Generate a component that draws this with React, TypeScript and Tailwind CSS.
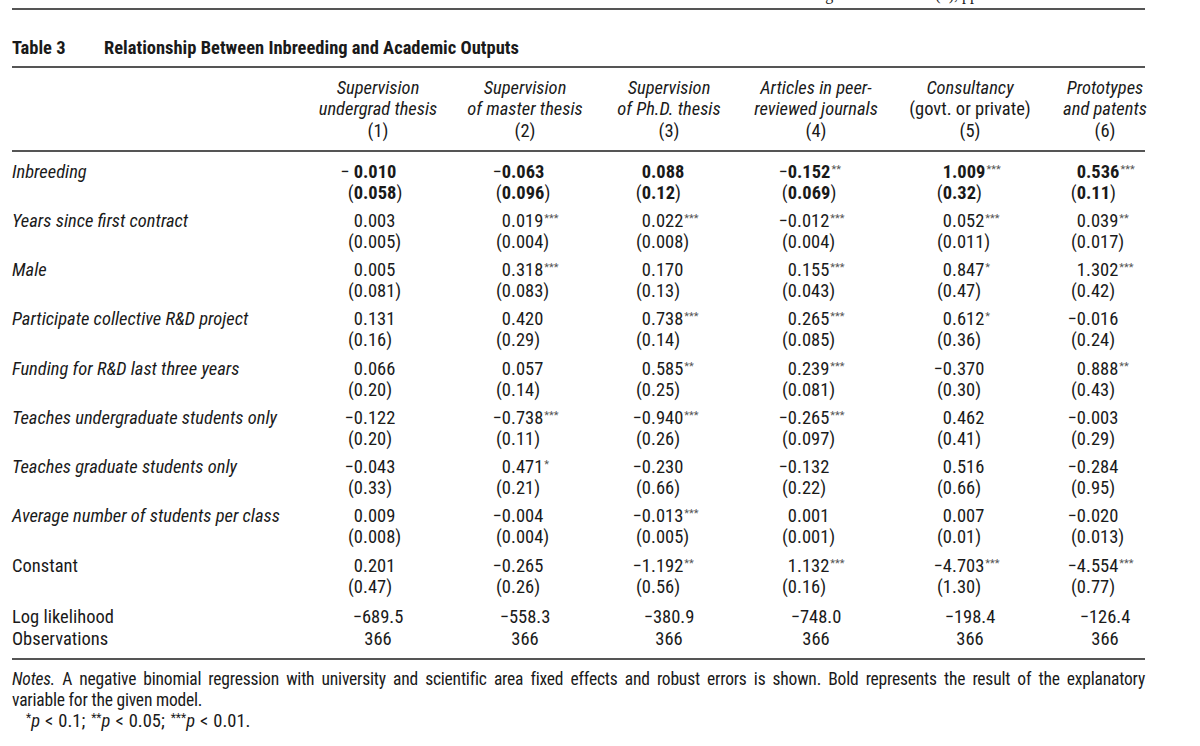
import type { ReactNode } from 'react';

type Cell = [string, number, string];
type Row = { label: string; italic: boolean; bold?: boolean; cells: Cell[] };

const rows: Row[] = [
  {
    label: 'Inbreeding',
    italic: true,
    bold: true,
    cells: [
      ['− 0.010', 0, '0.058'],
      ['−0.063', 0, '0.096'],
      ['0.088', 0, '0.12'],
      ['−0.152', 2, '0.069'],
      ['1.009', 3, '0.32'],
      ['0.536', 3, '0.11'],
    ],
  },
  {
    label: 'Years since first contract',
    italic: true,
    cells: [
      ['0.003', 0, '0.005'],
      ['0.019', 3, '0.004'],
      ['0.022', 3, '0.008'],
      ['−0.012', 3, '0.004'],
      ['0.052', 3, '0.011'],
      ['0.039', 2, '0.017'],
    ],
  },
  {
    label: 'Male',
    italic: true,
    cells: [
      ['0.005', 0, '0.081'],
      ['0.318', 3, '0.083'],
      ['0.170', 0, '0.13'],
      ['0.155', 3, '0.043'],
      ['0.847', 1, '0.47'],
      ['1.302', 3, '0.42'],
    ],
  },
  {
    label: 'Participate collective R&D project',
    italic: true,
    cells: [
      ['0.131', 0, '0.16'],
      ['0.420', 0, '0.29'],
      ['0.738', 3, '0.14'],
      ['0.265', 3, '0.085'],
      ['0.612', 1, '0.36'],
      ['−0.016', 0, '0.24'],
    ],
  },
  {
    label: 'Funding for R&D last three years',
    italic: true,
    cells: [
      ['0.066', 0, '0.20'],
      ['0.057', 0, '0.14'],
      ['0.585', 2, '0.25'],
      ['0.239', 3, '0.081'],
      ['−0.370', 0, '0.30'],
      ['0.888', 2, '0.43'],
    ],
  },
  {
    label: 'Teaches undergraduate students only',
    italic: true,
    cells: [
      ['−0.122', 0, '0.20'],
      ['−0.738', 3, '0.11'],
      ['−0.940', 3, '0.26'],
      ['−0.265', 3, '0.097'],
      ['0.462', 0, '0.41'],
      ['−0.003', 0, '0.29'],
    ],
  },
  {
    label: 'Teaches graduate students only',
    italic: true,
    cells: [
      ['−0.043', 0, '0.33'],
      ['0.471', 1, '0.21'],
      ['−0.230', 0, '0.66'],
      ['−0.132', 0, '0.22'],
      ['0.516', 0, '0.66'],
      ['−0.284', 0, '0.95'],
    ],
  },
  {
    label: 'Average number of students per class',
    italic: true,
    cells: [
      ['0.009', 0, '0.008'],
      ['−0.004', 0, '0.004'],
      ['−0.013', 3, '0.005'],
      ['0.001', 0, '0.001'],
      ['0.007', 0, '0.01'],
      ['−0.020', 0, '0.013'],
    ],
  },
  {
    label: 'Constant',
    italic: false,
    cells: [
      ['0.201', 0, '0.47'],
      ['−0.265', 0, '0.26'],
      ['−1.192', 2, '0.56'],
      ['1.132', 3, '0.16'],
      ['−4.703', 3, '1.30'],
      ['−4.554', 3, '0.77'],
    ],
  },
];

const logLik = ['−689.5', '−558.3', '−380.9', '−748.0', '−198.4', '−126.4'];

const headers: { lines: string[]; upright?: number }[] = [
  { lines: ['Supervision', 'undergrad thesis'] },
  { lines: ['Supervision', 'of master thesis'] },
  { lines: ['Supervision', 'of Ph.D. thesis'] },
  { lines: ['Articles in peer-', 'reviewed journals'] },
  { lines: ['Consultancy', '(govt. or private)'], upright: 1 },
  { lines: ['Prototypes', 'and patents'] },
];

// where the integer part ends, so the decimal points line up per column
const offsets = ['ml-[16px]', 'ml-[22px]', 'ml-[10px]', 'ml-[20px]', 'ml-[17px]', 'ml-[1px]'];

const grid = 'grid grid-cols-[295px_142px_152px_136px_158px_150px_120px]';

function Stars({ n }: { n: number }) {
  if (!n) return null;
  return (
    <span className="ml-[1px] align-[5px] text-[11px] leading-none text-[#555]">{'*'.repeat(n)}</span>
  );
}

function Num({ col, value, bold, paren, stars }: { col: number; value: string; bold?: boolean; paren?: boolean; stars?: number }) {
  const m = value.match(/^(−\s?)?(\d+)(\.\d+)$/);
  const sign = m?.[1] ?? '';
  const int = m?.[2] ?? value;
  const frac = m?.[3] ?? '';
  const w = bold ? 'font-bold' : '';
  return (
    <div className="flex whitespace-pre">
      <span className={`${offsets[col]} w-[40px] text-right`}>
        {paren ? '(' : sign}
        <span className={w}>{int}</span>
      </span>
      <span>
        <span className={w}>{frac}</span>
        {paren ? ')' : null}
        <Stars n={stars ?? 0} />
      </span>
    </div>
  );
}

function Rule() {
  return <div className="h-[2px] w-[1133px] bg-[#555]" />;
}

function P({ children }: { children: ReactNode }) {
  return <span className="italic">{children}</span>;
}

function Sig({ n, p }: { n: number; p: string }) {
  return (
    <span className="mr-[6px]">
      <span className="align-[5px] text-[12px] leading-none">{'*'.repeat(n)}</span>
      <P>p</P>
      <span className="mx-[5px]">&lt;</span>
      {p}
    </span>
  );
}

export default function App() {
  return (
    <div className="min-h-[746px] bg-white pl-[12px] text-[18.5px] text-[#1a1a1a] font-['Liberation_Sans_Narrow','Roboto_Condensed','DejaVu_Sans_Condensed',sans-serif]">
      {/* running head, cut off by the page edge */}
      <div className="h-[8px] overflow-hidden">
        <div className="-mt-[13px] flex whitespace-pre font-['Liberation_Serif',serif] text-[16px] leading-[16px]">
          <span className="ml-[752px]">Inbreeding</span>
          <span className="ml-[86px]">00(0), pp. 1–22</span>
        </div>
      </div>
      <Rule />

      <div className="mt-[27.5px] flex h-[21px] items-center font-bold text-[18.5px] leading-[21px]">
        <span className="w-[92px]">Table 3</span>
        <span>Relationship Between Inbreeding and Academic Outputs</span>
      </div>
      <div className="mt-[7.5px]">
        <Rule />
      </div>

      {/* column heads */}
      <div className={`${grid} pt-[9.5px] pb-[8px] leading-[21.5px]`}>
        <div />
        {headers.map((h, i) => (
          <div key={i} className="flex flex-col items-center whitespace-nowrap">
            {h.lines.map((l, j) => (
              <span key={j} className={h.upright === j ? '' : 'italic'}>
                {l}
              </span>
            ))}
            <span>({i + 1})</span>
          </div>
        ))}
      </div>
      <Rule />

      {/* estimates */}
      <div className="pt-[9.5px] leading-[21px]">
        {rows.map((r, ri) => (
          <div key={r.label} className={`${grid} ${ri < rows.length - 1 ? 'pb-[7.25px]' : ''}`}>
            <div className={r.italic ? 'italic' : ''}>{r.label}</div>
            {r.cells.map((c, ci) => (
              <div key={ci}>
                <Num col={ci} value={c[0]} bold={r.bold} stars={c[1]} />
                <Num col={ci} value={c[2]} bold={r.bold} paren />
              </div>
            ))}
          </div>
        ))}

        <div className={`${grid} mt-[9px]`}>
          <div>Log likelihood</div>
          {logLik.map((v, i) => (
            <div key={i} className="text-center">{v}</div>
          ))}
        </div>
        <div className={`${grid} mt-[1px] pb-[8.5px]`}>
          <div>Observations</div>
          {logLik.map((_, i) => (
            <div key={i} className="text-center">366</div>
          ))}
        </div>
      </div>
      <Rule />

      <div className="w-[1133px] pt-[8.5px] text-[17.5px] leading-[21px] tracking-[-0.2px]">
        <div className="whitespace-nowrap text-justify [text-align-last:justify]">
          <span className="italic">Notes.</span> A negative binomial regression with university and scientific area fixed effects and robust errors is shown. Bold represents the result of the explanatory
        </div>
        <div>variable for the given model.</div>
        <div className="flex pl-[14px] pt-[0.5px] text-[18.5px] tracking-normal">
          <Sig n={1} p="0.1;" />
          <Sig n={2} p="0.05;" />
          <Sig n={3} p="0.01." />
        </div>
      </div>
    </div>
  );
}
